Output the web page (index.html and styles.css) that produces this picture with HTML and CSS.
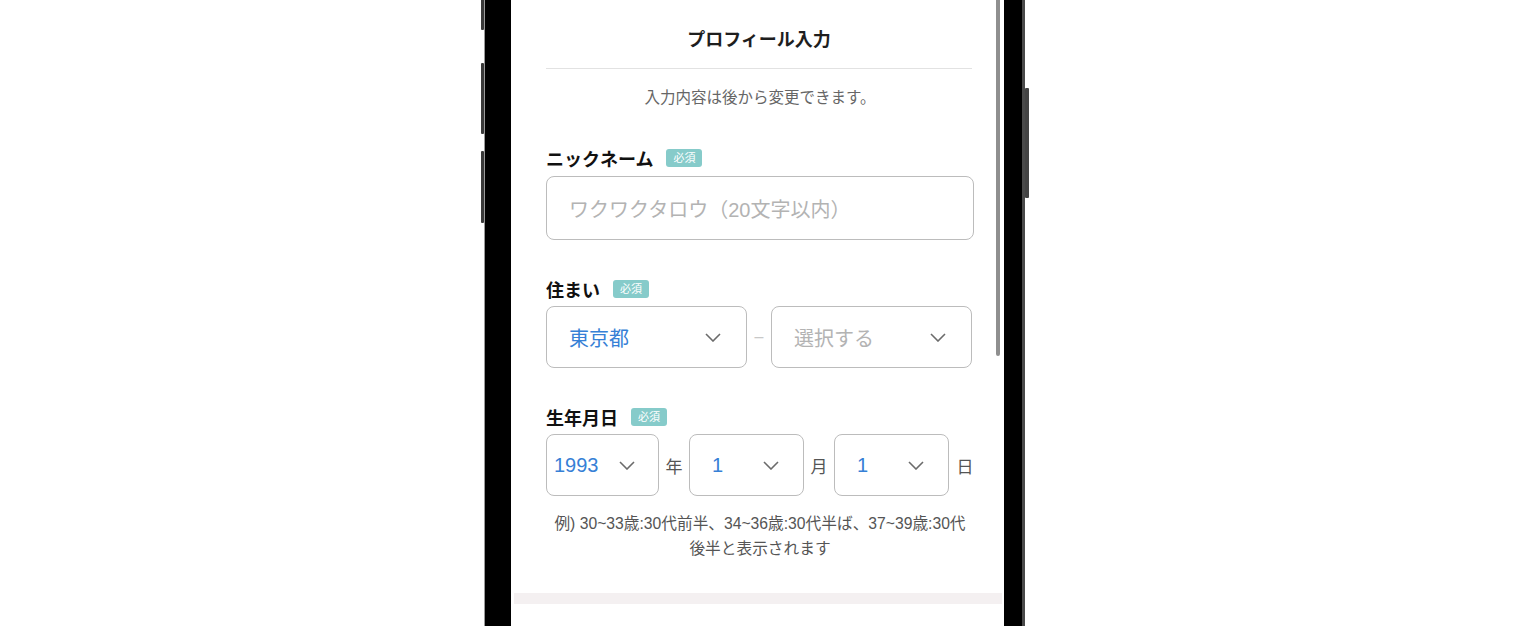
FILE: index.html
```html
<!DOCTYPE html>
<html lang="ja">
<head>
    <meta charset="UTF-8">
    <meta name="viewport" content="width=device-width, initial-scale=1.0">
    <title>プロフィール入力</title>
    <link rel="stylesheet" href="styles.css">
</head>
<body>
    <!-- 端末フレーム -->
    <div class="phone">
        <span class="side-btn side-btn-top"></span>
        <span class="side-btn side-btn-vol-up"></span>
        <span class="side-btn side-btn-vol-down"></span>
        <span class="side-btn side-btn-power"></span>

        <!-- 画面 -->
        <div class="screen">
            <div class="scrollbar"></div>

            <div class="header">プロフィール入力</div>
            <p class="lead">入力内容は後から変更できます。</p>

            <!-- ニックネーム -->
            <div class="field field-nickname">
                <div class="field-label">ニックネーム<span class="badge">必須</span></div>
                <div class="text-input">ワクワクタロウ（20文字以内）</div>
            </div>

            <!-- 住まい -->
            <div class="field">
                <div class="field-label">住まい<span class="badge">必須</span></div>
                <div class="select-row">
                    <div class="select select-wide">
                        <span class="select-value">東京都</span>
                        <svg class="chevron" width="16" height="9" viewBox="0 0 16 9"><polyline points="1,1 8,8 15,1"/></svg>
                    </div>
                    <span class="dash">–</span>
                    <div class="select select-wide">
                        <span class="select-placeholder">選択する</span>
                        <svg class="chevron" width="16" height="9" viewBox="0 0 16 9"><polyline points="1,1 8,8 15,1"/></svg>
                    </div>
                </div>
            </div>

            <!-- 生年月日 -->
            <div class="field">
                <div class="field-label">生年月日<span class="badge">必須</span></div>
                <div class="birth-row">
                    <div class="select select-year">
                        <span class="select-value">1993</span>
                        <svg class="chevron" width="16" height="9" viewBox="0 0 16 9"><polyline points="1,1 8,8 15,1"/></svg>
                    </div>
                    <span class="unit">年</span>
                    <div class="select select-small">
                        <span class="select-value">1</span>
                        <svg class="chevron" width="16" height="9" viewBox="0 0 16 9"><polyline points="1,1 8,8 15,1"/></svg>
                    </div>
                    <span class="unit">月</span>
                    <div class="select select-small">
                        <span class="select-value">1</span>
                        <svg class="chevron" width="16" height="9" viewBox="0 0 16 9"><polyline points="1,1 8,8 15,1"/></svg>
                    </div>
                    <span class="unit unit-last">日</span>
                </div>
                <p class="note">例) 30~33歳:30代前半、34~36歳:30代半ば、37~39歳:30代後半と表示されます</p>
            </div>

            <div class="band"></div>
        </div>
    </div>
</body>
</html>
```

FILE: styles.css
```css
body {
    margin: 0;
    background-color: #fff;
    font-family: "Liberation Sans", "Noto Sans CJK JP", sans-serif;
    color: #222;
    overflow: hidden;
}

/* 端末フレーム */
.phone {
    position: relative;
    width: 541px;
    height: 626px;
    margin-left: 484px;
    padding: 0 18px 0 26px;
    box-sizing: border-box;
    background-color: #000;
    border-left: 1px solid #9a9a9a;
    border-right: 3px solid #4a4a4a;
}

/* 側面ボタン */
.side-btn {
    position: absolute;
    width: 3px;
    background-color: #3a3a3a;
    border-radius: 1px;
}

.side-btn-top {
    left: -4px;
    top: -4px;
    height: 34px;
}

.side-btn-vol-up {
    left: -4px;
    top: 63px;
    height: 71px;
}

.side-btn-vol-down {
    left: -4px;
    top: 151px;
    height: 72px;
}

.side-btn-power {
    right: -7px;
    top: 88px;
    width: 4px;
    height: 110px;
    background-color: #444;
}

/* 画面 */
.screen {
    position: relative;
    width: 493px;
    height: 626px;
    padding: 0 30px 0 35px;
    box-sizing: border-box;
    background-color: #fff;
    overflow: hidden;
}

.scrollbar {
    position: absolute;
    left: 485px;
    top: 0;
    width: 4px;
    height: 356px;
    background-color: #8f8f8f;
    border-radius: 0 0 2px 2px;
}

/* 見出し */
.header {
    font-size: 18px;
    font-weight: bold;
    line-height: 24px;
    text-align: center;
    padding: 28px 0 16px;
    border-bottom: 1px solid #e2e2e2;
    margin-right: 2px;
    color: #1e1e1e;
}

.lead {
    margin: 19px 0 0;
    font-size: 15.5px;
    line-height: 20px;
    text-align: center;
    color: #666;
}

/* 入力項目 */
.field {
    margin-top: 40px;
}

.field-nickname {
    margin-top: 41px;
}

.field-label {
    display: flex;
    align-items: flex-start;
    height: 22px;
    font-size: 18px;
    font-weight: bold;
    line-height: 22px;
    color: #111;
}

.badge {
    display: inline-block;
    margin-left: 13px;
    padding: 0 7px;
    height: 18px;
    line-height: 18px;
    font-size: 11px;
    font-weight: normal;
    color: #fff;
    background-color: #86cbca;
    border-radius: 3px;
}

.text-input {
    margin-top: 5px;
    height: 64px;
    box-sizing: border-box;
    padding-left: 22px;
    display: flex;
    align-items: center;
    font-size: 20px;
    color: #b3b3b3;
    border: 1px solid #bcbcbc;
    border-radius: 8px;
}

/* セレクト */
.select-row,
.birth-row {
    display: flex;
    align-items: center;
    margin-top: 4px;
}

.select {
    display: flex;
    flex-shrink: 0;
    justify-content: space-between;
    align-items: center;
    height: 62px;
    box-sizing: border-box;
    padding: 0 24px 0 22px;
    font-size: 20px;
    border: 1px solid #bcbcbc;
    border-radius: 8px;
}

.select-wide {
    width: 201px;
    padding-right: 25px;
}

.select-year {
    width: 113px;
    padding-left: 7px;
    padding-right: 23px;
}

.select-small {
    width: 115px;
}

.select-value {
    color: #3680d6;
}

.select-placeholder {
    color: #b3b3b3;
}

.chevron {
    flex-shrink: 0;
}

.chevron polyline {
    fill: none;
    stroke: #6b6b6b;
    stroke-width: 1.6;
}

.dash {
    width: 24px;
    text-align: center;
    font-size: 16px;
    color: #c8c8c8;
}

.unit {
    width: 18px;
    padding: 0 6px;
    font-size: 17px;
    text-align: center;
    color: #555;
}

.unit-last {
    padding: 0 0 0 7px;
}

.note {
    margin: 15px 0 0;
    padding: 0 6px;
    font-size: 15.7px;
    line-height: 25px;
    text-align: center;
    color: #555;
}

/* 下部の区切り */
.band {
    margin: 32px -28px 0 -32px;
    height: 11px;
    background-color: #f4f0f1;
}
```
